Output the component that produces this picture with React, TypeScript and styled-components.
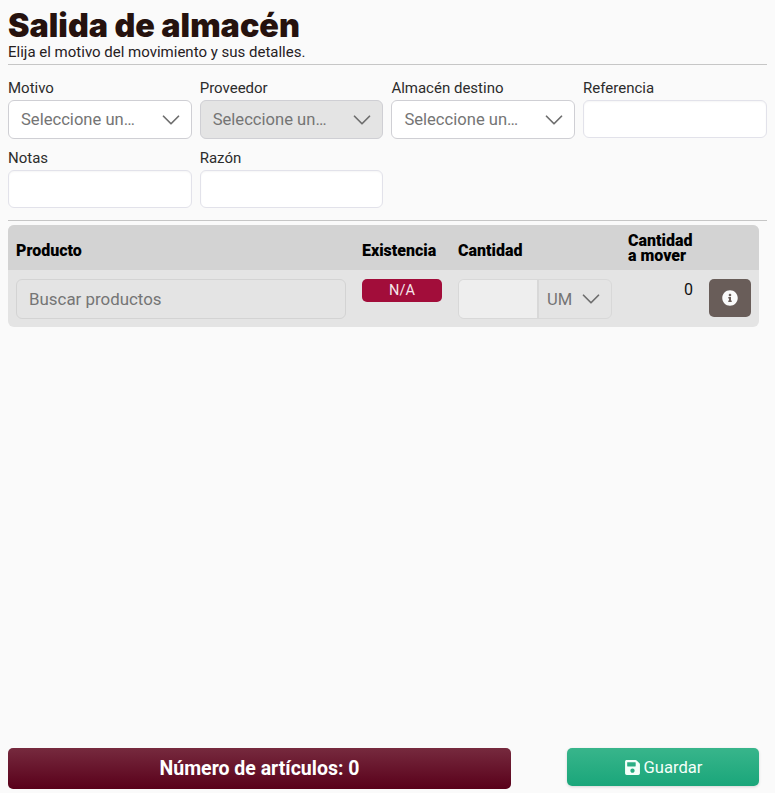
import React from 'react'
import styled, {createGlobalStyle} from 'styled-components'
import {FaInfoCircle, FaSave} from 'react-icons/fa'

const GlobalStyle = createGlobalStyle`
  * {
    box-sizing: border-box;
  }
  body {
    margin: 0;
    background: #fafafa;
    color: #212529;
    font-family: 'Roboto', 'Liberation Sans', sans-serif;
  }
`

const Page = styled.div`
  display: flex;
  flex-direction: column;
  height: 793px;
  padding: 8px 8px 4px;
  overflow: hidden;
`

const Title = styled.h1`
  margin: 0;
  font-family: 'Inter', sans-serif;
  font-size: 32.3px;
  font-weight: 900;
  line-height: 35px;
  color: #26120e;
`

const Subtitle = styled.p`
  margin: 0;
  font-size: 15px;
  line-height: 18px;
  color: #26201e;
`

const Divider = styled.hr`
  width: 100%;
  margin: ${p => p.$top}px 0 0;
  border: 0;
  border-top: 1px solid #c6c6c6;
`

const FieldGrid = styled.div`
  display: grid;
  grid-template-columns: repeat(3, 183.7px) 1fr;
  column-gap: 8px;
  row-gap: 11px;
  margin-top: 15px;
`

const Field = styled.label`
  display: flex;
  flex-direction: column;
  gap: 3px;
`

const FieldLabel = styled.span`
  font-size: 15px;
  line-height: 17px;
  color: #2c2c2c;
`

const Select = styled.div`
  display: flex;
  align-items: center;
  justify-content: space-between;
  height: 39px;
  padding: 0 10px 0 12px;
  border: 1px solid #cfcfd4;
  border-radius: 6px;
  background: ${p => (p.$disabled ? '#e4e4e4' : '#ffffff')};
  font-size: 16.6px;
  color: #757575;
`

const TextInput = styled.input`
  height: 38px;
  border: 1px solid #e2e2ea;
  border-radius: 6px;
  background: #ffffff;
  box-shadow: inset 0 1px 2px rgba(0, 0, 0, 0.04);
  outline: none;
`

const Chevron = styled.svg`
  width: 20px;
  height: 20px;
  fill: none;
  stroke: #6e6e6e;
  stroke-width: 1.4;
  stroke-linecap: round;
  stroke-linejoin: round;
`

const Table = styled.div`
  width: 751px;
  margin-top: 4px;
  border-radius: 6px;
  overflow: hidden;
  background: #e4e4e4;
`

const TableRow = styled.div`
  display: grid;
  grid-template-columns: 330px 80px 154px 65px 42px;
  column-gap: 16px;
  padding: 0 8px;
`

const HeaderRow = styled(TableRow)`
  align-items: center;
  height: 45px;
  background: #d3d3d3;
`

const BodyRow = styled(TableRow)`
  align-items: start;
  height: 57px;
  padding-top: 9px;
`

const HeaderCell = styled.div`
  padding-top: ${p => (p.$wrapped ? 0 : 5)}px;
  font-size: 16px;
  font-weight: 900;
  line-height: 15px;
  color: #000000;
`

const ProductSearch = styled.div`
  display: flex;
  align-items: center;
  height: 40px;
  padding: 0 12px;
  border: 1px solid #d3d3d3;
  border-radius: 6px;
  font-size: 16.9px;
  color: #757575;
`

const StockBadge = styled.div`
  height: 23px;
  border-radius: 5px;
  background: #a20d3a;
  font-size: 14.5px;
  line-height: 23px;
  text-align: center;
  color: #f5e6ea;
`

const QuantityGroup = styled.div`
  display: flex;
  height: 40px;
  border: 1px solid #d8d8d8;
  border-radius: 6px;
  overflow: hidden;
`

const QuantityInput = styled.div`
  width: 80px;
  background: #eeeeee;
  border-right: 2px solid #d8d8d8;
`

const UnitSelect = styled.div`
  flex: 1;
  display: flex;
  align-items: center;
  justify-content: space-between;
  padding: 0 10px 0 8px;
  font-size: 16.6px;
  color: #757575;
`

const MoveAmount = styled.div`
  font-size: 16px;
  line-height: 22px;
  text-align: right;
  color: #111111;
`

const InfoButton = styled.button`
  display: flex;
  align-items: center;
  justify-content: center;
  height: 38px;
  padding: 0;
  border: 0;
  border-radius: 5px;
  background: #695d59;
  font-size: 16px;
  color: #fafafa;
`

const Footer = styled.div`
  display: flex;
  align-items: flex-start;
  justify-content: space-between;
  width: 751px;
  margin-top: auto;
`

const CountBar = styled.div`
  width: 503px;
  height: 41px;
  border-radius: 5px;
  background: linear-gradient(#762a3e, #59001a);
  font-size: 19.5px;
  font-weight: 700;
  line-height: 41px;
  text-align: center;
  color: #ffffff;
`

const SaveButton = styled.button`
  display: flex;
  align-items: center;
  justify-content: center;
  gap: 3px;
  width: 192px;
  height: 38px;
  border: 0;
  border-radius: 5px;
  background: linear-gradient(#38b58b, #1aa67a);
  box-shadow: 0 1px 3px rgba(0, 0, 0, 0.15);
  font-family: inherit;
  font-size: 16.6px;
  color: #f4fff9;
  svg {
    font-size: 17px;
  }
`

const ChevronIcon: React.FC = () => (
    <Chevron viewBox="0 0 16 16">
        <path d="M2 5l6 6 6-6"/>
    </Chevron>
)

const SelectField: React.FC<{label: string, disabled?: boolean}> = ({label, disabled}) => (
    <Field>
        <FieldLabel>{label}</FieldLabel>
        <Select $disabled={disabled}>
            Seleccione un…
            <ChevronIcon/>
        </Select>
    </Field>
)

const InputField: React.FC<{label: string}> = ({label}) => (
    <Field>
        <FieldLabel>{label}</FieldLabel>
        <TextInput/>
    </Field>
)

const App: React.FC = () => {
    return <Page>
        <GlobalStyle/>
        <Title>Salida de almacén</Title>
        <Subtitle>Elija el motivo del movimiento y sus detalles.</Subtitle>
        <Divider $top={3}/>
        <FieldGrid>
            <SelectField label="Motivo"/>
            <SelectField label="Proveedor" disabled/>
            <SelectField label="Almacén destino"/>
            <InputField label="Referencia"/>
            <InputField label="Notas"/>
            <InputField label="Razón"/>
        </FieldGrid>
        <Divider $top={12}/>
        <Table>
            <HeaderRow>
                <HeaderCell>Producto</HeaderCell>
                <HeaderCell>Existencia</HeaderCell>
                <HeaderCell>Cantidad</HeaderCell>
                <HeaderCell $wrapped>Cantidad a mover</HeaderCell>
                <span/>
            </HeaderRow>
            <BodyRow>
                <ProductSearch>Buscar productos</ProductSearch>
                <StockBadge>N/A</StockBadge>
                <QuantityGroup>
                    <QuantityInput/>
                    <UnitSelect>UM <ChevronIcon/></UnitSelect>
                </QuantityGroup>
                <MoveAmount>0</MoveAmount>
                <InfoButton aria-label="Información"><FaInfoCircle/></InfoButton>
            </BodyRow>
        </Table>
        <Footer>
            <CountBar>Número de artículos: 0</CountBar>
            <SaveButton><FaSave/>Guardar</SaveButton>
        </Footer>
    </Page>
}

export default App
